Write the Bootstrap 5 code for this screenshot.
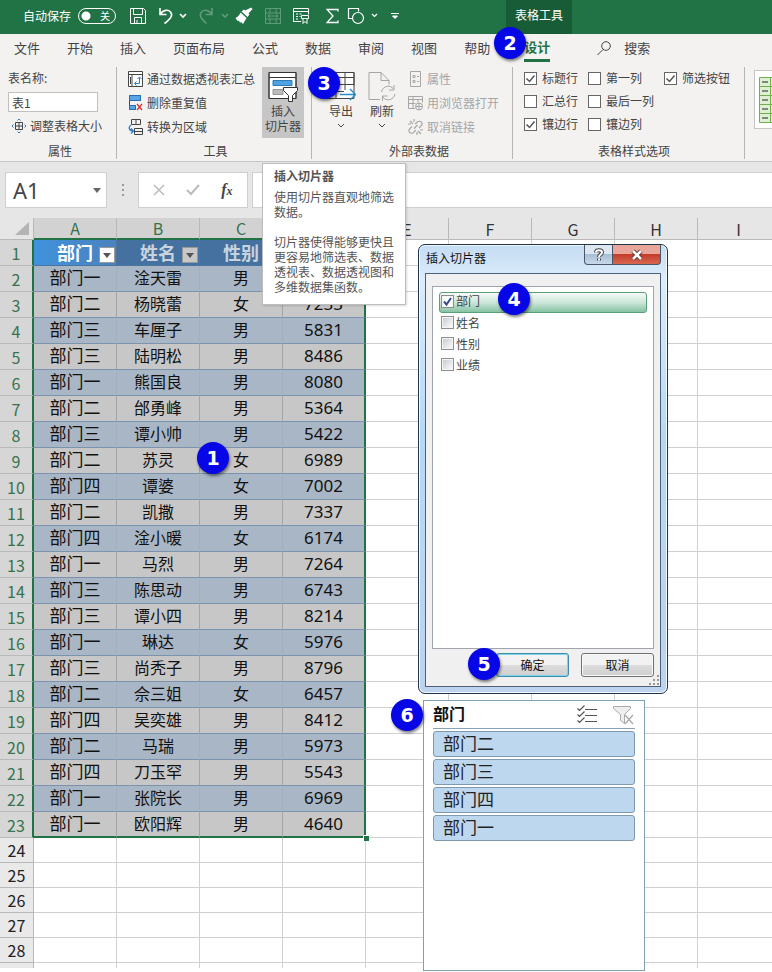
<!DOCTYPE html>
<html lang="zh-CN">
<head>
<meta charset="utf-8">
<meta name="viewport" content="width=device-width, initial-scale=1">
<title>表格工具 - 插入切片器</title>
<link href="https://cdn.jsdelivr.net/npm/bootstrap@5.3.0/dist/css/bootstrap.min.css" rel="stylesheet">
<style>
:root{--xl:#217346;--ink:#444;--line:#d0d0d0}
body{font-family:"Noto Sans CJK SC","Noto Sans",sans-serif;font-size:12px;line-height:16px;color:var(--ink);background:#fff;overflow-x:hidden}
svg{display:block;fill:none;stroke:currentColor;flex:none}
button{font:inherit;color:inherit}
.plain{border:0;background:none;padding:0}
.step{position:absolute;width:32px;height:32px;border-radius:50%;background:#0606e6;color:#fff;font:bold 19px/32px "DejaVu Sans","Noto Sans",sans-serif;text-align:center;box-shadow:1px 2px 3px rgba(0,0,0,.5);z-index:5}
/* title bar */
.titlebar{height:34px;background:var(--xl);color:#fff;padding:0 0 2px 23px}
.autosave{appearance:none;width:38px;height:16px;border:1px solid #fff;border-radius:8px;margin:0;background:radial-gradient(circle at 7px 7px,#fff 4px,transparent 5px)}
.switch-wrap{display:grid;margin:0 13px 0 7px}
.switch-wrap>*{grid-area:1/1}
.switch-wrap span{justify-self:end;align-self:center;font-size:10px;line-height:14px;padding-right:6px;pointer-events:none}
.dim{opacity:.28}
.ctx{background:#185c37;width:66px;height:34px;line-height:30px;text-align:center;margin:2px 0 0 107px}
/* tabs */
.tabs{height:28px;background:#f3f2f1;font-size:13px;padding-left:14px;gap:27px}
.tabs a{color:var(--ink);text-decoration:none;line-height:28px}
.tabs .on{color:var(--xl);font-weight:bold;border-bottom:3px solid var(--xl);line-height:26px;margin-left:7px}
.tabs .find{margin-left:20px;gap:13px}
.s2{left:494px;top:-7px}
/* ribbon */
.ribbon{height:100px;background:#f3f2f1;border-bottom:1px solid #c6c6c6;overflow:hidden}
.grp{border-right:1px solid #b8b6b4;margin-top:5px;height:92px;position:relative}
.grp footer{height:16px;text-align:center;margin-top:auto}
.cmd{height:24px}
.g1{width:117px;padding:3px 0 0 8px;gap:6px}
.g1 .tname{width:90px;height:20px;border:1px solid #c2c0be;background:#fff;padding:0 3px;font-size:12px;line-height:18px;color:var(--ink);border-radius:0}
.g2{width:195px;padding-left:11px}
.g3{width:201px;padding-left:14px}
.g4{width:232px;padding-left:11px}
.g1,.g2,.g3,.g4{flex:none}
.slicer-btn{width:42px;height:71px;background:#c6c6c6;line-height:15px;margin-right:7px}
.off{color:#a6a6a6}
.opt{height:22px;gap:5px}
.opt input{appearance:none;width:13px;height:13px;border:1px solid #666;background:#fff;margin:0}
.opt input:checked{background:#fff url("data:image/svg+xml,%3Csvg xmlns='http://www.w3.org/2000/svg' viewBox='0 0 11 11'%3E%3Cpath d='M1.5 5.5l3 3 5-6' fill='none' stroke='%23555' stroke-width='1.5'/%3E%3C/svg%3E")}
.opts{display:grid;grid-template-columns:64px 76px 76px;row-gap:1px}
.gallery{border:1px solid #c6c6c6;border-right:0;background:#fff;width:18px;height:59px;margin:8px 0 0 9px;padding:6px 0 0 4px}
.s3{left:308px;top:5px}
/* formula bar */
.fbar{height:56px;background:#e6e6e6;padding:10px 0 0 5px}
.fbox{height:36px;border:1px solid #cfcfcf;background:#fff}
.namebox{width:102px;font:22px/34px "Noto Sans",sans-serif;padding:0 5px 0 7px}
.fxbox{width:110px}
.fx{font:italic bold 16px/20px "Liberation Serif",serif}
.fx sub{font-size:12px;bottom:0}
.dots{width:31px;color:#999}
/* sheet */
.sheet{height:754px;overflow:hidden;position:relative}
.grid{table-layout:fixed;border-collapse:separate;border-spacing:0;width:100%;min-width:780px;color:#111;text-align:center;font-size:16px}
.grid col{width:83px}
.grid col:first-child{width:34px}
.grid col:last-child{width:auto}
.grid td,.grid th{padding:0;border:0 solid var(--line);border-width:0 1px 1px 0;line-height:23px;height:25px;font-weight:normal;overflow:hidden;white-space:nowrap}
.grid thead th{height:22px;line-height:20px;background:#e6e6e6;border-color:#b9b9b9;color:#333}
.grid thead th.sel{background:#d2d2d2;border-bottom:2px solid var(--xl);color:#37734f}
.grid tbody th{background:#e9e9e9;border-color:#b9b9b9;color:#222}
.grid tbody th.sel{background:#d6d6d6;color:#37734f;border-right:2px solid var(--xl);padding-top:2px}
.grid .data th,.grid .data td{height:26px}
.grid .stub th,.grid .stub td{height:5px;line-height:0;border-bottom:0}
.grid .rec td{font-size:16px;line-height:22px;vertical-align:top}
.grid .rec td.dept{font-size:17px}
.grid .rec td.num{font:17px/23px "Noto Sans",sans-serif}
.grid .rec td.in{background:#c7c7c7;border-color:#a2a4a8;border-bottom-color:#7b93ad}
.grid .rec.band td.in{background:#a9b6c5;border-right-color:#a2b0c0}
.grid .last td.in{border-bottom:2px solid var(--xl)}
.grid td.edge{border-right:2px solid var(--xl)!important}
.grid .caps td.in{background:#44719f;color:#c9d3de;font-weight:bold;font-size:18px;line-height:25px;border-color:#4b759f}
.grid .caps td.first{background:linear-gradient(90deg,#4092dc,#4b82bd);color:#fff}
.cap{gap:6px;padding-right:1px}
.filt{width:16px;height:16px;background:#c7c7c7;border:1px solid #999;padding:0;margin-top:7px;display:flex;align-items:center;justify-content:center;color:#555}
.first .filt{background:#fff}
.handle{position:absolute;left:363px;top:617px;width:6px;height:6px;background:var(--xl);border:solid #fff;border-width:1px 0 0 1px}
.s1{left:197px;top:224px}
/* tooltip card */
.tip{position:absolute;left:262px;top:163px;width:144px;background:#fff;border:1px solid #bdbdbd;padding:4px 10px 10px 11px;line-height:15px;color:#555;z-index:3;box-shadow:1px 1px 2px rgba(0,0,0,.15)}
.tip strong{margin-bottom:6px}
.tip p{margin:0 0 15px}
/* dialog */
.dlg{position:absolute;left:418px;top:26px;width:250px;height:450px;border:1px solid #22344c;border-radius:7px;background:linear-gradient(#c5dcf3,#dbecfb 34px,#b6d8f5 190px,#bdd3ee);padding:0 6px 6px;box-shadow:inset 0 0 0 1px #f2f9ff;color:#222;z-index:2}
.dlg-head{height:28px}
.dlg-head h2{font-size:12px;line-height:16px;margin:5px 0 0 1px;font-weight:normal;color:#111}
.wbtn{height:20px;border:1px solid #4a5568;border-top:0;padding:0}
.help{width:29px;background:linear-gradient(#dde7f2 45%,#a9bfd6 50%,#c7d8ea);border-radius:0 0 0 4px;color:#444}
.close-x{width:48px;background:linear-gradient(#e9a79b 45%,#c33d2b 50%,#d7674f);border-radius:0 0 4px 0;border-left:0}
.pane{border:1px solid #4c6079;background:#f0f0f0;padding:12px 6px 9px;flex:1}
.list{border:1px solid #a0a5ab;background:#fff;padding:5px 6px;flex:1}
.list label{height:21px;padding-left:2px;gap:2px;color:#444}
.list label.hot{height:21px;border:1px solid #5a9e7a;border-radius:3px;background:linear-gradient(#f5fbf8,#cde6d9 50%,#86c3a3);padding:0 0 3px 1px}
.list label:not(.hot){padding-bottom:2px}
.list input{appearance:none;width:13px;height:13px;border:1px solid #8e8f8f;background:linear-gradient(135deg,#c4c8cc,#fff);box-shadow:inset 0 0 0 1px #f4f4f4;margin:0}
.list input:checked{background:#fff url("data:image/svg+xml,%3Csvg xmlns='http://www.w3.org/2000/svg' viewBox='0 0 11 11'%3E%3Cpath d='M2 5.5l2.5 3L9 2' fill='none' stroke='%23354b8c' stroke-width='2'/%3E%3C/svg%3E")}
.dbtn{width:73px;height:24px;border:1px solid #707070;border-radius:3px;background:linear-gradient(#f2f2f2 48%,#dcdcdc 52%,#cfcfcf);padding:0;line-height:20px;color:#111;box-shadow:inset 0 0 0 1px #fafafa}
.dbtn.ok{border-color:#3c8fa8;box-shadow:inset 0 0 0 1px #7fd3ea}
.s4{left:79px;top:38px}.s5{left:49px;top:403px}
.grip{position:absolute;right:8px;bottom:8px;color:#999}
/* slicer */
.slc{position:absolute;left:423px;top:482px;width:222px;height:271px;border:1px solid #7da0b5;background:#fff;padding:1px 9px;color:#222}
.slc header{height:27px;border-bottom:1px solid #88a2b3;margin-bottom:2px}
.slc h3{font-size:16px;line-height:22px;font-weight:bold;margin:0;color:#111}
.item{height:26px;border:1px solid #7f98ad;border-radius:3px;background:#bdd7ee;font-size:17px;line-height:20px;padding:0 0 2px 9px;text-align:left;margin-bottom:2px;width:100%}
.s6{left:391px;top:481px}
.shell{position:relative}
</style>
<script src="https://cdn.jsdelivr.net/npm/bootstrap@5.3.0/dist/js/bootstrap.bundle.min.js"></script>
</head>
<body>
<div class="shell">
<header class="titlebar d-flex align-items-center">
  <label for="auto">自动保存</label>
  <div class="switch-wrap"><input id="auto" class="autosave" type="checkbox" role="switch"><span>关</span></div>
  <button class="plain" aria-label="保存"><svg width="18" height="18" viewBox="0 0 18 18"><path d="M1.500 1.500h13l2 2v13h-15zM4.500 1.500v6h9v-6M5.500 16.500v-6h7v6M8 16v-3"/></svg></button>
  <button class="plain ms-2" aria-label="撤销"><svg width="34" height="18" viewBox="0 0 34 18"><path stroke-width="1.600" d="M5 1v6.500h6.500M5.500 7C8 3 13 2 15.500 5s1 6-6 11.500M25 7l3 3 3-3"/></svg></button>
  <button class="plain ms-2 dim" aria-label="恢复"><svg width="34" height="18" viewBox="0 0 34 18"><path stroke-width="1.600" d="M15 1v6.500H8.500M14.500 7C12 3 7 2 4.500 5s-1 6 5 11.500M25 7l3 3 3-3"/></svg></button>
  <button class="plain ms-1" aria-label="格式刷"><svg width="18" height="18" viewBox="0 0 18 18"><path fill="currentColor" stroke="none" d="M16 .5l1.500 1.500-4 4.500 1 1-2 2.500-6-5.500 2.500-2 1.300 1zM5.500 5.500l6 5.500-3.500 6-2-2-1 .7-1-2-1.500.3L.5 11c2.500-1 4-3 5-5.500z"/></svg></button>
  <button class="plain dim ms-2 ps-1" aria-label="合并"><svg width="16" height="16" viewBox="0 0 16 16"><path d="M.5.5h15v15H.5zM0 5h16M0 11h16M5 0v5M11 0v5M5 11v5M11 11v5M3 8h10M5 6L3 8l2 2M11 6l2 2-2 2"/></svg></button>
  <button class="plain ms-2 ps-1" aria-label="表格"><svg width="17" height="18" viewBox="0 0 17 18"><path d="M8 14.500H.5V1.500h15v6M.5 4.500h15M3 7h2M6.500 7h2M3 9.500h2M3 12h2M6.500 9.500h1M8.500 8.500h7v3h-7zM10 11.500v5l2-2 2 2v-5"/></svg></button>
  <button class="plain ms-3" aria-label="求和"><svg width="13" height="16" viewBox="0 0 13 16"><path stroke-width="1.300" d="M12 3.500v-2H1l6 6.500-6 6.500h11v-2"/></svg></button>
  <button class="plain ms-2" aria-label="形状"><svg width="32" height="18" viewBox="0 0 32 18"><path stroke-width="1.200" d="M6 11.500H1.500v-10h10v3M25 7l2.500 2.500L30 7"/><circle cx="11" cy="11" r="5.500" stroke-width="1.200"/></svg></button>
  <button class="plain ms-2 ps-1" aria-label="自定义"><svg width="8" height="8" viewBox="0 0 8 8"><path d="M0 1.500h8M1.500 4L4 6.500 6.500 4z" fill="currentColor"/></svg></button>
  <div class="ctx">表格工具</div>
</header>
<nav class="tabs d-flex position-relative">
  <a href="#">文件</a><a href="#">开始</a><a href="#">插入</a><a href="#">页面布局</a><a href="#">公式</a><a href="#">数据</a><a href="#">审阅</a><a href="#">视图</a><a href="#">帮助</a>
  <a class="on" href="#">设计</a>
  <a class="find d-flex align-items-center" href="#"><svg width="14" height="15" viewBox="0 0 14 15"><circle cx="9" cy="5" r="4.300"/><path d="M6 8.500L.5 14"/></svg>搜索</a>
  <span class="step s2">2</span>
</nav>
<section class="ribbon d-flex position-relative">
  <div class="grp g1 d-flex flex-column">
    <label for="tn">表名称:</label>
    <input id="tn" class="tname" value="表1">
    <button class="plain d-flex align-items-center gap-1 ps-1"><svg width="14" height="14" viewBox="0 0 14 14"><path d="M3.500 3.500h7v7h-7zM7 3v8M3 7h8"/><path stroke="#2b7cd3" d="M5.500 1.500L7 0l1.500 1.500M5.500 12.500L7 14l1.500-1.500M1.500 5.500L0 7l1.500 1.500M12.500 5.500L14 7l-1.500 1.500"/></svg>调整表格大小</button>
    <footer class="pe-1">属性</footer>
  </div>
  <div class="grp g2 d-flex flex-column">
    <div class="d-flex">
      <div class="flex-grow-1">
        <button class="plain cmd d-flex align-items-center gap-1"><svg width="15" height="16" viewBox="0 0 15 16"><path fill="#fff" d="M.5.5h14v15H.5zM.5 3.500h14M4 3.500v12M2.500 6v7"/><path stroke="#2b7cd3" d="M7 12.500h4.500v-6M9.500 8l2-2 2 2M8.500 10.500l-2 2 2 2"/></svg>通过数据透视表汇总</button>
        <button class="plain cmd d-flex align-items-center gap-1"><svg width="15" height="16" viewBox="0 0 15 16"><path d="M1.500.5h11v5h-11zM1.500 5.500v9h6v-4h-6"/><path fill="#55a5e8" stroke="#2b6cb0" d="M1.500.5h11v5h-11zM1.500 10.500h6v4h-6z"/><path stroke="#d13438" stroke-width="1.300" d="M9 9l5 6M14 9l-5 6"/></svg>删除重复值</button>
        <button class="plain cmd d-flex align-items-center gap-1"><svg width="15" height="16" viewBox="0 0 15 16"><path d="M3.500.5h9v5h-9zM8 .5v5M6.500 9.500h8v6h-8zM6.500 12.500h8"/><path stroke="#2b7cd3" stroke-width="1.300" d="M3 6c-3 2-2 6 2 6M3 9.500L5.500 12 3 14.500"/></svg>转换为区域</button>
      </div>
      <button class="plain slicer-btn d-flex flex-column align-items-center"><svg class="mt-1" width="30" height="32" viewBox="0 0 30 32"><path fill="#fff" d="M1 1.500h27v26H1z"/><path stroke="#333" d="M1 1.500h27v26H1zM1 6.500h27"/><path fill="#4fa3e3" stroke="#2b7cb8" d="M5 9.500h19v5H5z"/><path fill="#bbb" stroke="#999" d="M5 18.500h10v5H5z"/><path fill="#fff" stroke="#333" d="M15.500 16.500h14v3l-5 5v6h-4v-6l-5-5z"/></svg><span>插入<br>切片器</span></button>
    </div>
    <footer class="pe-2">工具</footer>
  </div>
  <div class="grp g3 d-flex flex-column">
    <div class="d-flex align-items-start">
      <button class="plain d-flex flex-column align-items-center"><svg class="mt-1" width="30" height="32" viewBox="0 0 30 32"><path fill="#fff" d="M1 1.500h27v26H1z"/><path d="M18 27.500H1v-26h27v13M1 6.500h27M1 13.500h27M1 20.500h17M10 2v25M19 2v17"/><path stroke="#2b8cc4" stroke-width="1.400" d="M14 23.500h15M24 18l5.500 5.500L24 29"/></svg><span>导出</span><svg class="mt-1" width="8" height="5" viewBox="0 0 8 5"><path d="M1 1l3 3 3-3"/></svg></button>
      <button class="plain d-flex flex-column align-items-center ms-2 ps-1"><svg class="mt-1" width="28" height="32" viewBox="0 0 28 32"><g stroke="#a5a5a5"><path d="M12 28.500H1v-27h12l8 8v4M13 1.500v8h8M13.500 21c1-6 9-8 12-3M26 14v5h-5M27 23c-1 6-9 8-12 3M14.500 30v-5h5"/></g></svg><span>刷新</span><svg class="mt-1" width="8" height="5" viewBox="0 0 8 5"><path d="M1 1l3 3 3-3"/></svg></button>
      <div class="off ms-2 ps-1">
        <button disabled class="plain off cmd d-flex align-items-center gap-1"><svg width="15" height="16" viewBox="0 0 15 16"><path d="M2.500.5h10v15h-10zM5 4.500h2v2H5zM5 9.500h2v2H5zM9 5.500h2M9 10.500h2"/></svg>属性</button>
        <button disabled class="plain off cmd d-flex align-items-center gap-1"><svg width="15" height="16" viewBox="0 0 15 16"><path d="M7 13.500H.5V1.500h14v6M.5 4.500h14M.5 8.500h7M5 1.500v12M10 4.500v3"/><circle cx="11" cy="11.500" r="3.500"/><path d="M8 11.500h6M11 8v7"/></svg>用浏览器打开</button>
        <button disabled class="plain off cmd d-flex align-items-center gap-1"><svg width="15" height="16" viewBox="0 0 15 16"><path stroke-width="1.200" d="M7 5l3-2.500c3-1 5 1.500 3.500 4L11 9M8 11l-3 3c-3 1-5-1.500-3.500-4L4 7.500M6 9.500L9.500 6M2 2l3 3M6 0v3M0 5h3M10 12l3 3M9 13v3M12 11h3"/></svg>取消链接</button>
      </div>
    </div>
    <footer>外部表数据</footer>
  </div>
  <div class="grp g4 d-flex flex-column">
    <div class="opts">
      <label class="opt d-flex align-items-center"><input type="checkbox" checked>标题行</label>
      <label class="opt d-flex align-items-center"><input type="checkbox">第一列</label>
      <label class="opt d-flex align-items-center"><input type="checkbox" checked>筛选按钮</label>
      <label class="opt d-flex align-items-center"><input type="checkbox">汇总行</label>
      <label class="opt d-flex align-items-center"><input type="checkbox">最后一列</label><span></span>
      <label class="opt d-flex align-items-center"><input type="checkbox" checked>镶边行</label>
      <label class="opt d-flex align-items-center"><input type="checkbox">镶边列</label>
    </div>
    <footer>表格样式选项</footer>
  </div>
  <div class="gallery"><svg width="14" height="46" viewBox="0 0 14 46"><path fill="#dff0d2" stroke="#6fae52" d="M.5.5h14v45H.5zM0 9.500h14M0 18.500h14M0 27.500h14M0 36.500h14M11.500 0v46"/><path stroke="#222" d="M3 5h6M3 14h6M3 23h6M3 32h6M3 41h6"/></svg></div>
  <span class="step s3">3</span>
</section>
<section class="fbar d-flex align-items-start">
  <button class="fbox namebox d-flex align-items-center justify-content-between">A1<svg width="8" height="5" viewBox="0 0 8 5"><path fill="#666" stroke="none" d="M0 0h8L4 5z"/></svg></button>
  <div class="dots d-flex justify-content-center"><svg width="2" height="36" viewBox="0 0 2 36"><path stroke-width="2" stroke-dasharray="2 3" d="M1 12v12"/></svg></div>
  <div class="fbox fxbox d-flex align-items-center justify-content-around px-1">
    <button class="plain" aria-label="取消输入"><svg width="12" height="12" viewBox="0 0 12 12"><path stroke="#bbb" stroke-width="1.500" d="M1 1l10 10M11 1L1 11"/></svg></button>
    <button class="plain" aria-label="输入"><svg width="14" height="12" viewBox="0 0 14 12"><path stroke="#bbb" stroke-width="2" d="M1 6l4 4 8-9"/></svg></button>
    <button class="plain fx" aria-label="插入函数">f<sub>x</sub></button>
  </div>
  <input class="fbox flex-grow-1 ms-1 border-end-0" aria-label="编辑栏">
</section>
<main class="sheet">
  <table class="grid">
    <colgroup><col><col><col><col><col><col><col><col><col><col></colgroup>
    <thead><tr><th class="corner"><svg class="ms-auto me-1" width="14" height="13" viewBox="0 0 14 13"><path fill="#b4b4b4" stroke="none" d="M14 0v13H0z"/></svg></th><th class="sel">A</th><th class="sel">B</th><th class="sel">C</th><th class="sel"></th><th>E</th><th>F</th><th>G</th><th>H</th><th>I</th></tr></thead>
    <tbody id="rows"></tbody>
  </table>
  <span class="handle"></span>
  <span class="step s1">1</span>
  <section class="dlg d-flex flex-column" role="dialog" aria-labelledby="dt">
    <div class="dlg-head d-flex align-items-start">
      <h2 id="dt" class="me-auto">插入切片器</h2>
      <button class="wbtn help d-flex align-items-center justify-content-center" aria-label="帮助"><svg width="12" height="14" viewBox="0 0 12 14"><path stroke="#444" stroke-width="4" d="M3 4.500C3 1.500 9 1.500 9 4.500 9 6.500 6 6.500 6 9M6 10.500v2"/><path stroke="#fff" stroke-width="2" d="M3 4.500C3 1.500 9 1.500 9 4.500 9 6.500 6 6.500 6 9M6 10.500v2"/></svg></button>
      <button class="wbtn close-x d-flex align-items-center justify-content-center" aria-label="关闭"><svg width="14" height="12" viewBox="0 0 14 12"><path stroke="#5b3030" stroke-width="4.500" d="M3 2l8 8M11 2l-8 8"/><path stroke="#fff" stroke-width="2.600" d="M3 2l8 8M11 2l-8 8"/></svg></button>
    </div>
    <div class="pane d-flex flex-column">
      <div class="list d-flex flex-column">
        <label class="hot d-flex align-items-center"><input type="checkbox" checked>部门</label>
        <label class="d-flex align-items-center"><input type="checkbox">姓名</label>
        <label class="d-flex align-items-center"><input type="checkbox">性别</label>
        <label class="d-flex align-items-center"><input type="checkbox">业绩</label>
      </div>
      <div class="d-flex justify-content-end mt-1">
        <button class="dbtn ok me-2">确定</button><button class="dbtn ms-1">取消</button>
      </div>
    </div>
    <svg class="grip" width="10" height="10" viewBox="0 0 10 10"><path stroke-width="2" stroke-dasharray="2 2" d="M8 1h2M4 5h6M0 9h10"/></svg>
    <span class="step s4">4</span><span class="step s5">5</span>
  </section>
  <section class="slc">
    <header class="d-flex align-items-center">
      <h3 class="me-auto align-self-start">部门</h3>
      <button class="plain me-3" aria-label="多选"><svg width="20" height="20" viewBox="0 0 20 20"><path stroke="#555" stroke-width="1.200" d="M8 4.500h12M8 10.500h12M8 16.500h12M.5 3.500l2 2 5-5M.5 9.500l2 2 5-5M.5 15.500l2 2 5-5"/></svg></button>
      <button class="plain" aria-label="清除筛选器"><svg width="22" height="20" viewBox="0 0 22 20"><path fill="#eee" stroke="#aaa" d="M.5 1.500h17v2l-6 6v9l-4-3v-6l-7-6z"/><path stroke="#aaa" stroke-width="1.300" d="M12 10l8 9M20 10l-8 9"/></svg></button>
    </header>
    <button class="item">部门二</button><button class="item">部门三</button><button class="item">部门四</button><button class="item">部门一</button>
  </section>
  <span class="step s6">6</span>
</main>
<aside class="tip" role="tooltip"><strong class="d-block">插入切片器</strong><p>使用切片器直观地筛选数据。</p><p class="mb-0">切片器使得能够更快且更容易地筛选表、数据透视表、数据透视图和多维数据集函数。</p></aside>
</div>
<script>
const people = `一 淦天雷 男
二 杨晓蕾 女 7233
三 车厘子 男 5831
三 陆明松 男 8486
一 熊国良 男 8080
二 邰勇峰 男 5364
三 谭小帅 男 5422
二 苏灵 女 6989
四 谭婆 女 7002
二 凯撒 男 7337
四 淦小暖 女 6174
一 马烈 男 7264
三 陈思动 男 6743
三 谭小四 男 8214
一 琳达 女 5976
三 尚秃子 男 8796
二 佘三姐 女 6457
四 吴奕雄 男 8412
二 马瑞 男 5973
四 刀玉罕 男 5543
一 张院长 男 6969
一 欧阳辉 男 4640`.split("\n").map(l => l.split(" "));
const blank = n => "<td></td>".repeat(n);
const filt = n => `<button class="filt" aria-label="筛选${n}"><svg width="8" height="5" viewBox="0 0 8 5"><path fill="currentColor" stroke="none" d="M0 0h8L4 5z"/></svg></button>`;
const cap = (n, c) => `<td class="in ${c}"><div class="cap d-flex align-items-start justify-content-end">${n}${filt(n)}</div></td>`;
let html = `<tr class="data rec caps"><th class="sel">1</th>${cap("部门","first")}${cap("姓名","")}<td class="in">性别</td><td class="in edge"></td>${blank(5)}</tr>`;
people.forEach(([d, n, s, v], i) => {
  html += `<tr class="data rec${i % 2 ? "" : " band"}${i === 21 ? " last" : ""}"><th class="sel">${i + 2}</th><td class="in dept">部门${d}</td><td class="in">${n}</td><td class="in">${s}</td><td class="in num edge">${v || ""}</td>${blank(5)}</tr>`;
});
for (let r = 24; r < 29; r++) html += `<tr><th>${r}</th>${blank(9)}</tr>`;
html += `<tr class="stub"><th></th>${blank(9)}</tr>`;
document.getElementById("rows").innerHTML = html;
</script>
</body>
</html>
